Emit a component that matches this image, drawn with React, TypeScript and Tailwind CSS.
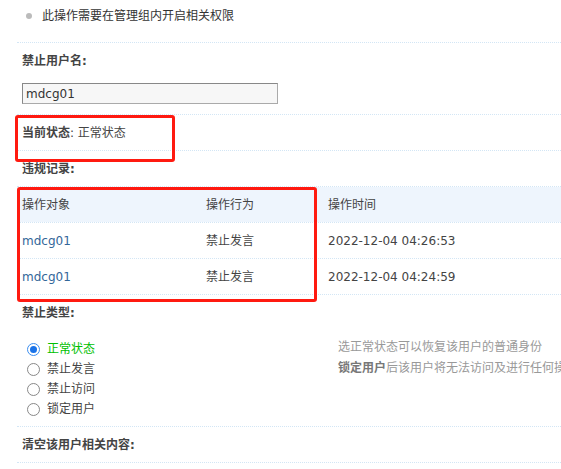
import React from "react";

const font = "font-['DejaVu_Sans','Noto_Sans_CJK_SC',sans-serif]";

const Line = () => <div className="h-px border-t border-dotted border-[#d3e6f5]" />;

const Title = ({ children }: { children: React.ReactNode }) => (
  <div className="h-[35px] flex items-center pl-[5px] font-bold text-[#444]">{children}</div>
);

const records = [
  { user: "mdcg01", action: "禁止发言", time: "2022-12-04 04:26:53" },
  { user: "mdcg01", action: "禁止发言", time: "2022-12-04 04:24:59" },
];

const types = ["正常状态", "禁止发言", "禁止访问", "锁定用户"];

export default function App() {
  return (
    <div className={`relative w-[561px] h-[469px] overflow-hidden bg-white text-[12px] text-[#444] ${font}`}>
      {/* tip */}
      <div className="h-[42px] flex items-start pt-[7px] pl-[26px]">
        <span className="w-[6px] h-[6px] rounded-full bg-[#bbb] mt-[6px]" />
        <span className="ml-[10px] text-[#333]">此操作需要在管理组内开启相关权限</span>
      </div>

      <div className="pl-[17px]">
        <Line />
        <Title>禁止用户名:</Title>
        <div className="h-[36px] pl-[5px] pt-[5px]">
          <div className="w-[256px] h-[21px] border border-[#aaa] border-t-[#888] border-l-[#888] bg-[#f7f7f7] flex items-center pl-[3px] text-[#333]">
            mdcg01
          </div>
        </div>
        <Line />
        <div className="h-[35px] flex items-center pl-[5px]">
          <span className="font-bold">当前状态</span>
          <span>:&nbsp;正常状态</span>
        </div>
        <Line />
        <Title>违规记录:</Title>
        <Line />
        <div className="h-[35px] flex items-center bg-[#eef5fd]">
          <span className="w-[189px] shrink-0 pl-[5px]">操作对象</span>
          <span className="w-[122px] shrink-0">操作行为</span>
          <span>操作时间</span>
        </div>
        <Line />
        {records.map((r, i) => (
          <React.Fragment key={i}>
            <div className="h-[35px] flex items-center">
              <span className="w-[189px] shrink-0 pl-[5px] text-[#336699]">{r.user}</span>
              <span className="w-[122px] shrink-0">{r.action}</span>
              <span>{r.time}</span>
            </div>
            <Line />
          </React.Fragment>
        ))}
        <Title>禁止类型:</Title>
        <div className="h-[96px] flex pt-[9px]">
          <div className="w-[300px] shrink-0 pl-[10px]">
            {types.map((t, i) => (
              <label key={t} className="h-[20px] flex items-center gap-[7px]">
                {i === 0 ? (
                  <span className="w-[13px] h-[13px] rounded-full border border-[#3b8ef0] flex items-center justify-center">
                    <span className="w-[7px] h-[7px] rounded-full bg-[#1a73e8]" />
                  </span>
                ) : (
                  <span className="w-[13px] h-[13px] rounded-full border border-[#888] bg-white" />
                )}
                <span className={i === 0 ? "text-[#00c000]" : "text-[#444]"}>{t}</span>
              </label>
            ))}
          </div>
          <div className="pl-[21px] text-[#999] leading-[21px] whitespace-nowrap -mt-[2px]">
            <div>选正常状态可以恢复该用户的普通身份</div>
            <div>
              <span className="font-bold text-[#777]">锁定用户</span>后该用户将无法访问及进行任何操作
            </div>
          </div>
        </div>
        <Line />
        <Title>清空该用户相关内容:</Title>
        <Line />
      </div>

      {/* annotation boxes */}
      <div className="absolute left-[15px] top-[115px] w-[160px] h-[47px] border-[3px] border-[#ff1a10] rounded-[3px]" />
      <div className="absolute left-[17px] top-[187px] w-[300px] h-[115px] border-[3px] border-[#ff1a10] rounded-[3px]" />
    </div>
  );
}
